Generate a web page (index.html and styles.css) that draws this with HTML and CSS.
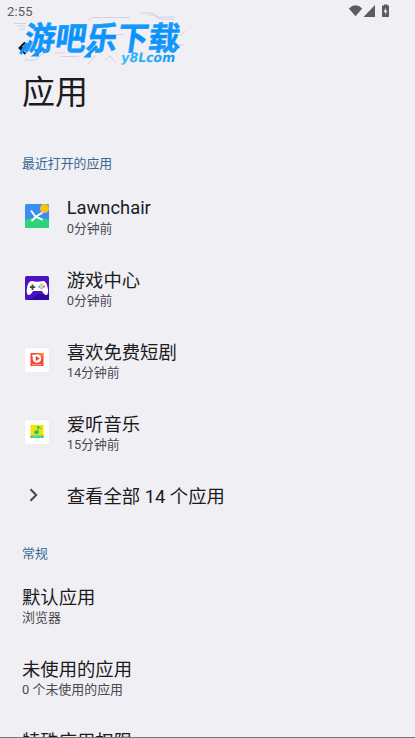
FILE: index.html
```html
<!DOCTYPE html>
<html lang="zh-CN">
<head>
<meta charset="utf-8">
<title>应用</title>
<link rel="stylesheet" href="styles.css">
</head>
<body>
<div class="screen">
  <header class="status">
    <span class="clock">2:55</span>
    <svg class="status-icons" width="44" height="16" viewBox="0 0 44 16" fill="#5c5c60">
      <path d="M.8 7.6Q7.5.8 14.2 7.6L7.5 15.2Z"/>
      <path d="M27 4v12H15.500Z"/>
      <path fill-rule="evenodd" d="M36 3.500V4.500H34V16H41V4.500H39.500V3.500ZM37.900 6.800V9.700H39.500L37.200 13.800V11H35.500Z"/>
    </svg>
  </header>
  <div class="toolbar">
    <svg width="14" height="14" viewBox="0 0 14 14" fill="none" stroke="#111216" stroke-width="2"><path d="M9 7H2M7 1.500L1.500 7 7.500 13"/></svg>
  </div>
  <svg class="brand" width="180" height="66" viewBox="10 6 180 66">
    <defs>
      <linearGradient id="blue" x1="0" y1="0" x2="0" y2="1"><stop offset="0" stop-color="#28a4fa"/><stop offset=".5" stop-color="#0590fc"/><stop offset="1" stop-color="#239ff9"/></linearGradient>
      <linearGradient id="cyan" x1="0" x2="1"><stop offset="0" stop-color="#39bff4"/><stop offset="1" stop-color="#1997f8"/></linearGradient>
    </defs>
    <g fill="none" stroke="#b6b5e0" stroke-width=".7" opacity=".75">
      <path d="M14 23.500H26M17 26H25M19 29H25M88 20L93 17.500H130M140 13H152L158 17H175M148 15H154L159 19H174M117 34.500H124M55 53H65M61 56.500H79M24 60H35L44 53M88 64L96 55M105 60L110 56L116 63M174 45H184M180 36L185 31"/>
    </g>
    <g stroke="#0b93fc" stroke-width="3" fill="none"><path d="M27 43L20.500 54M44 48L35 55H39M97 46L87 56H91M174 43L179 48"/></g>
    <text class="brand-name" transform="translate(23 50) skewX(-8)" textLength="155" lengthAdjust="spacingAndGlyphs" fill="url(#blue)" stroke="url(#blue)">游吧乐下载</text>
    <text class="brand-url" transform="translate(120.500 61.500) skewX(-10)" textLength="54" lengthAdjust="spacingAndGlyphs" fill="url(#cyan)">y8Lcom</text>
  </svg>
  <h1>应用</h1>
  <h2 class="recent">最近打开的应用</h2>
  <ul class="apps">
    <li>
      <svg class="icon" viewBox="0 0 24 24"><defs><clipPath id="tile"><rect width="24" height="24" rx="1.500"/></clipPath></defs><g clip-path="url(#tile)"><path fill="#398df5" d="M0 0H24V24H0Z"/><path fill="#32d17e" d="M0 16Q12 10 24 16V24H0Z"/><circle cx="19.500" cy="4.500" r="4.500" fill="#fbc112"/><path d="M6 6.500L10 12 17.500 16M17.500 8.500L12 12 6.500 17" fill="none" stroke="#fff" stroke-width="1.900"/></g></svg>
      <div><p class="name latin">Lawnchair</p><p class="sub">0分钟前</p></div>
    </li>
    <li>
      <svg class="icon" viewBox="0 0 24 24"><rect width="24" height="24" rx="1.500" fill="#4c13c3"/><path d="M13 18H24V24H4Z" fill="#3507a0"/><path fill="#fff" d="M7 5Q12 6.500 18 5Q22 5 23 14Q23.500 19 21 19Q19 19 17 15H8Q6 19 3.500 19Q1 19 2 12Q3 5 7 5Z"/><path d="M7.500 8.500V14M4.800 11.200H10.200" stroke="#444" stroke-width="1.800"/><circle cx="16.500" cy="8.600" r="1.200" fill="#9cd934"/><circle cx="14.500" cy="10.800" r="1.200" fill="#3ac9d8"/><circle cx="18.700" cy="10.500" r="1.200" fill="#f15aaa"/><circle cx="16.700" cy="12.300" r="1.200" fill="#ffb52f"/></svg>
      <div><p class="name">游戏中心</p><p class="sub">0分钟前</p></div>
    </li>
    <li>
      <svg class="icon" viewBox="0 0 24 24"><rect x="-.3" y="-.3" width="24.600" height="24.600" rx="2" fill="#fff" stroke="#e8e7eb" stroke-width=".6"/><path fill="#fa4436" d="M5.500 5H18.500V18H5.500Z"/><path d="M13 5H18.500V10Z" fill="#ff8a35"/><circle cx="12" cy="10.500" r="4.300" fill="#fff"/><circle cx="8.500" cy="7.800" r="1.400" fill="#fff"/><path d="M10.700 8L14.800 10.500 10.700 13Z" fill="#f43b31"/><path d="M7 16.700H17" stroke="#ffc8b8" stroke-width="1" stroke-dasharray="1.800 .6"/></svg>
      <div><p class="name">喜欢免费短剧</p><p class="sub">14分钟前</p></div>
    </li>
    <li>
      <svg class="icon" viewBox="0 0 24 24"><rect x="-.3" y="-.3" width="24.600" height="24.600" rx="2" fill="#fff" stroke="#e8e7eb" stroke-width=".6"/><path fill="#fae200" d="M5.500 5H18.500V18H5.500Z"/><path fill="#1fcb96" d="M5.500 15.500H18.500V18H5.500Z"/><ellipse cx="11.500" cy="12.300" rx="2.500" ry="1.900" fill="#16c586"/><path d="M12.800 12V6.500L16 8.500" fill="none" stroke="#16c586" stroke-width="1.200"/><path d="M7.500 16.800H16.500" stroke="#b9f3d9" stroke-width=".8" stroke-dasharray="1.800 .6"/></svg>
      <div><p class="name">爱听音乐</p><p class="sub">15分钟前</p></div>
    </li>
    <li class="all">
      <svg class="icon" viewBox="0 0 24 24" fill="none" stroke="#45464e" stroke-width="2"><path d="M5.500 6.200L11.200 12 5.500 17.800"/></svg>
      <p class="name">查看全部 14 个应用</p>
    </li>
  </ul>
  <h2 class="general">常规</h2>
  <ul class="settings">
    <li><p class="name">默认应用</p><p class="sub">浏览器</p></li>
    <li><p class="name">未使用的应用</p><p class="sub">0 个未使用的应用</p></li>
    <li><p class="name">特殊应用权限</p></li>
  </ul>
</div>
</body>
</html>
```
FILE: styles.css
```css
* { box-sizing: border-box; margin: 0; padding: 0; }
body { background: #f0eff4; overflow: hidden; }
.screen {
  position: relative;
  height: 738px;
  overflow: hidden;
  border-bottom: 1px solid #77777b;
  font-family: Roboto, "Noto Sans CJK SC", sans-serif;
  color: #1b1b1e;
}
.status { display: flex; justify-content: space-between; height: 24px; padding: 0 23px 0 7px; }
.clock { font-size: 13px; line-height: 24px; color: #5c5c60; letter-spacing: .2px; }
.status-icons { margin-top: 1px; }
.toolbar { height: 47px; padding: 17px 0 0 18px; }
.toolbar svg { display: block; }
.brand { position: absolute; left: 10px; top: 6px; overflow: visible; }
.brand-name { font: 700 32.500px "Noto Sans CJK SC", sans-serif; stroke-width: .5px; }
.brand-url { font: 700 13px "DejaVu Sans", sans-serif; }
h1 { height: 83px; padding-left: 22px; font-size: 33px; line-height: 44px; font-weight: 400; }
h2 { height: 20px; padding-left: 22px; font-size: 12.900px; line-height: 20px; font-weight: 400; color: #376893; }
ul { list-style: none; }
.apps { padding-top: 6px; }
.apps li { display: flex; align-items: flex-start; height: 72px; padding: 17px 0 0 25px; }
.icon { width: 24px; height: 24px; margin: 7px 18px 0 -.3px; overflow: visible; flex: none; }
.name { font-size: 18.350px; line-height: 24px; white-space: pre; }
.latin { margin-top: -1px; padding-bottom: 1px; }
.sub { font-size: 12.800px; line-height: 16px; color: #494a50; }
.apps .all { height: 76px; }
.apps .all .icon { margin-top: -2px; }
.settings { padding-top: 6px; }
.settings li { height: 72px; padding: 16px 0 0 22px; }
.settings .sub { font-size: 12.950px; line-height: 16px; }
```
